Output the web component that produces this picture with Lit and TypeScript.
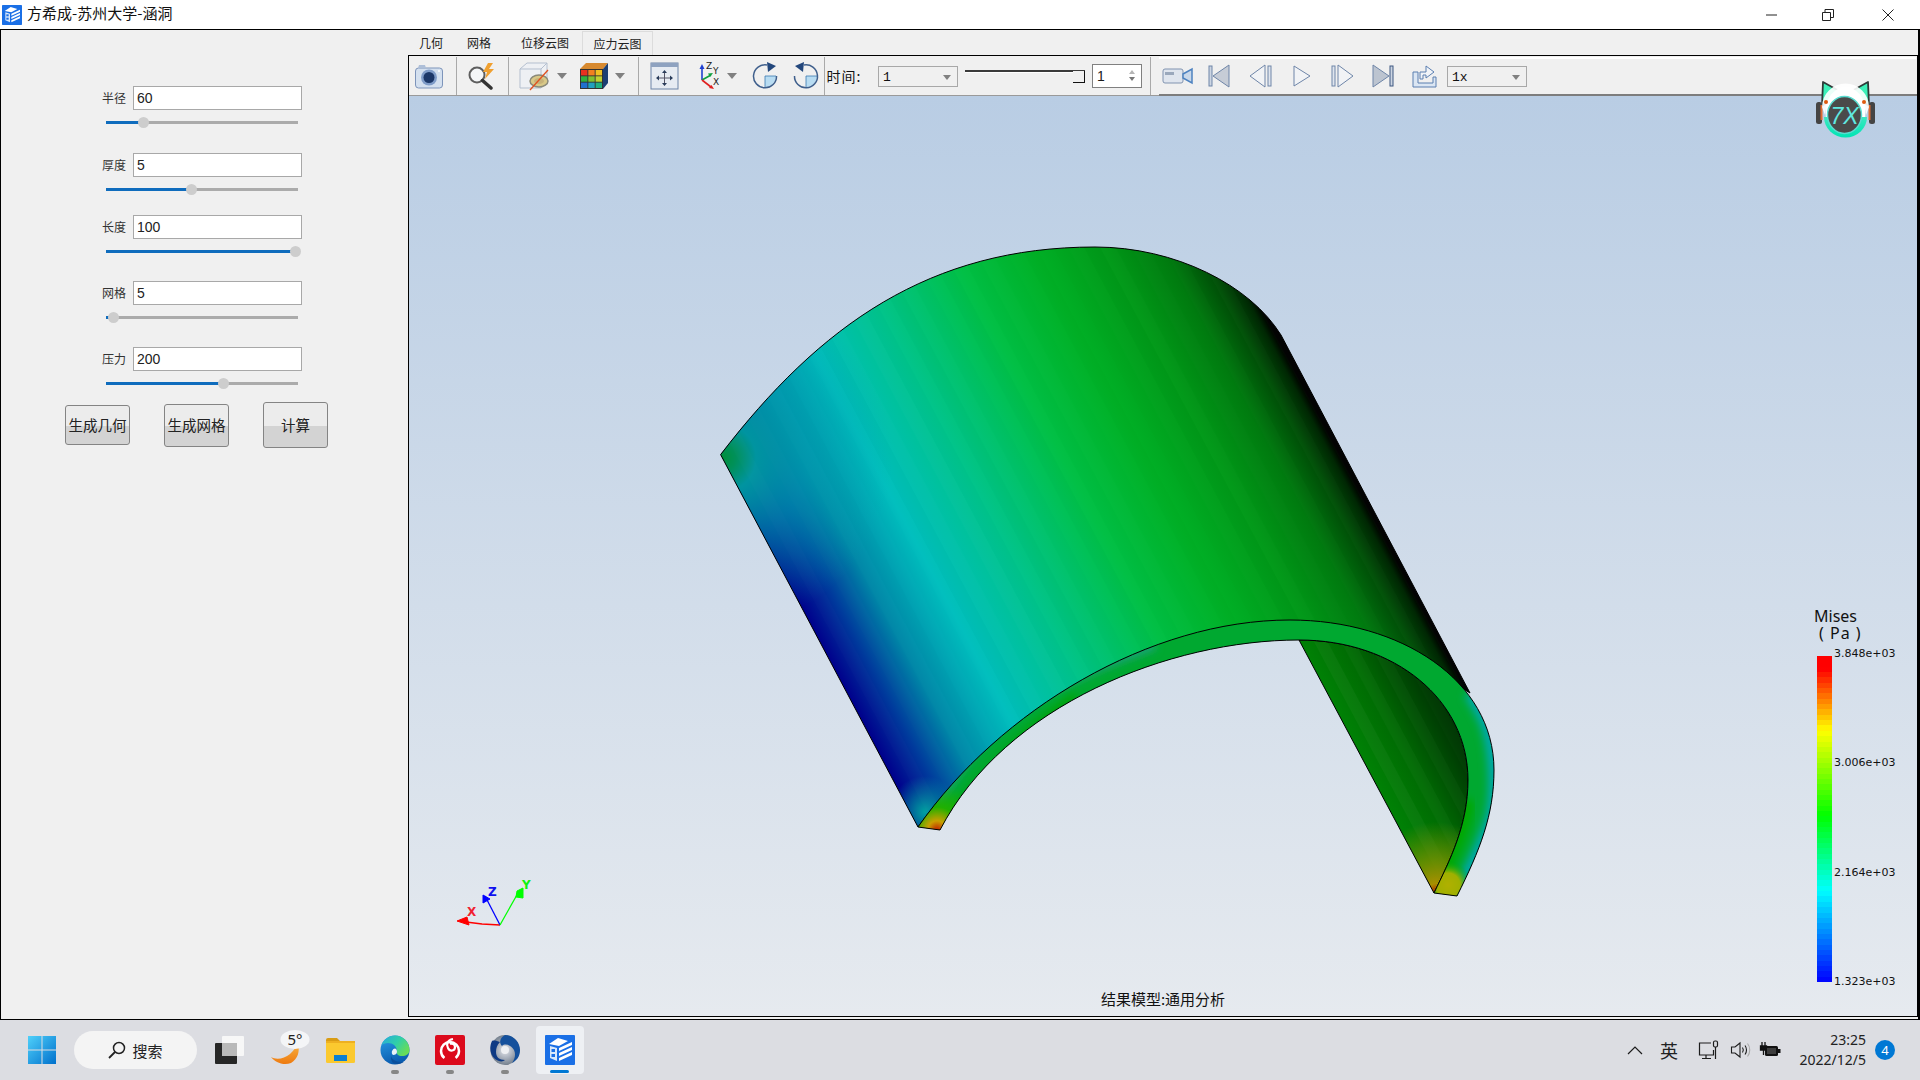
import { LitElement, html, css, svg, TemplateResult } from "lit";
import { customElement } from "lit/decorators.js";

type Pt = [number, number];
const smooth = (p: Pt[]): string => {
  let d = `M${p[0][0]} ${p[0][1]}`;
  for (let i = 0; i < p.length - 1; i++) {
    const a = p[Math.max(i - 1, 0)], b = p[i], c = p[i + 1], e = p[Math.min(i + 2, p.length - 1)];
    d += ` C${b[0] + (c[0] - a[0]) / 6} ${b[1] + (c[1] - a[1]) / 6} ${c[0] - (e[0] - b[0]) / 6} ${c[1] - (e[1] - b[1]) / 6} ${c[0]} ${c[1]}`;
  }
  return d;
};
const OUTER: Pt[] = [[918, 827], [977, 748], [1036, 700], [1095, 669], [1155, 645], [1214, 629], [1273, 621], [1300, 620], [1343, 624], [1383, 635], [1413, 647], [1440, 663], [1470, 693], [1487, 727], [1494, 770], [1492, 813], [1480, 847], [1457, 896]];
const INNER: Pt[] = [[940, 830], [1016, 745], [1076, 697], [1135, 669], [1194, 651], [1254, 642], [1299, 640], [1343, 646], [1383, 657], [1413, 673], [1437, 693], [1457, 723], [1468, 767], [1468, 800], [1460, 833], [1434, 893]];
const bodyPath = "M720.6 454.6 C820 325 930 247 1095 247 C1175 247 1250 285 1281 335 L1470 693 L1400 650 L1290 625 C1150 625 1000 712 918 827 Z";
const ringPath = "M918 827 C1000 710 1150 620 1290 620 C1400 620 1494 680 1494 770 C1494 815 1480 850 1457 896 L1434 893 C1450 860 1468 825 1468 780 C1468 700 1395 640 1299 640 C1170 640 1005 705 940 830 Z";
const cavPath = "M1299 640 C1395 640 1468 700 1468 780 C1468 825 1450 860 1434 893 Z";

const facets = (ox: number, oy: number, count: number, w: number, amp: number) => {
  const out: TemplateResult[] = [];
  for (let i = 0; i < count; i++) {
    const s = i * w;
    const bx = ox + 0.88 * s - 0.47 * 60, by = oy - 0.47 * s - 0.88 * 60;
    const L = 640;
    const p = [
      [bx, by],
      [bx + 0.88 * w, by - 0.47 * w],
      [bx + 0.88 * w + 0.47 * L, by - 0.47 * w + 0.88 * L],
      [bx + 0.47 * L, by + 0.88 * L],
    ].map((q) => q.join(",")).join(" ");
    const r = Math.sin(i * 12.9898) * 43758.5453;
    const f = r - Math.floor(r);
    out.push(svg`<polygon points=${p} fill=${i % 2 ? "#fff" : "#000"} opacity=${(f * amp).toFixed(3)}/>`);
  }
  return out;
};

const bandColor = (t: number) => {
  const k: Pt[] = [[0.04, 0], [0.23, 60], [0.49, 120], [0.72, 180], [1, 240]];
  if (t <= k[0][0]) return "hsl(0,100%,50%)";
  for (let i = 0; i < k.length - 1; i++) {
    if (t <= k[i + 1][0]) {
      const f = (t - k[i][0]) / (k[i + 1][0] - k[i][0]);
      return `hsl(${k[i][1] + f * (k[i + 1][1] - k[i][1])},100%,50%)`;
    }
  }
  return "hsl(240,100%,50%)";
};
const BANDS = 61;
const barGradient = "linear-gradient(to bottom," + Array.from({ length: BANDS }, (_, i) => {
  const c = bandColor((i + 0.5) / BANDS);
  return `${c} ${(i / BANDS) * 100}%,${c} ${((i + 1) / BANDS) * 100}%`;
}).join(",") + ")";

const place = (items: { cx: number; w: number; t: TemplateResult }[], origin: number) => {
  let cur = origin;
  return items.map((i) => {
    const m = i.cx - i.w / 2 - cur;
    cur = i.cx + i.w / 2;
    return html`<div class="slot" style="margin-left:${m}px;width:${i.w}px">${i.t}</div>`;
  });
};

const ic = (w: number, h: number, body: TemplateResult) =>
  html`<svg width=${w} height=${h} viewBox="0 0 ${w} ${h}">${body}</svg>`;

const I = {
  camera: ic(30, 26, svg`<rect x="1.5" y="5" width="27" height="20" rx="3" fill="#d4e0ef" stroke="#7d94ba"/><path d="M4 5l1-3h6l1 3z" fill="#aebfd8"/><circle cx="15" cy="14.5" r="8" fill="#7f9cc8"/><circle cx="15" cy="14.5" r="5.5" fill="#1b3768"/><circle cx="25" cy="8" r="1" fill="#fff"/>`),
  zoom: ic(32, 28, svg`<circle cx="11" cy="13" r="7.5" fill="#f4f6f8" stroke="#5e5e5e" stroke-width="2"/><path d="M16.5 18.5L25 26" stroke="#333" stroke-width="3.5" stroke-linecap="round"/><path d="M22 1l-5 9h4l-2 7 9-10h-5l4-6z" fill="#f0a030"/>`),
  clip: ic(32, 30, svg`<path d="M1 8l7-6h20v18l-6 7H1z" fill="#eef0f4" stroke="#b4bfcf"/><path d="M1 8h21v19M22 8l6-6" fill="none" stroke="#b4bfcf"/><ellipse cx="20" cy="20" rx="9" ry="6" fill="#d8c888" stroke="#8a8a7a" stroke-width="1.5"/><ellipse cx="20" cy="20" rx="5" ry="3" fill="#c7b27a"/><path d="M11 29L29 9" stroke="#e05020" stroke-width="1.3"/>`),
  grid: ic(30, 28, svg`<path d="M1 7l6-6h22l-5 6z" fill="#d88a30"/><path d="M24 7l5-6v20l-5 6z" fill="#1c3f74"/><rect x="1" y="7" width="23" height="20" fill="#333"/><rect x="2" y="8" width="6.4" height="5.4" fill="#e83020"/><rect x="9.3" y="8" width="6.4" height="5.4" fill="#f08020"/><rect x="16.6" y="8" width="6.4" height="5.4" fill="#f0c020"/><rect x="2" y="14.3" width="6.4" height="5.4" fill="#30b040"/><rect x="9.3" y="14.3" width="6.4" height="5.4" fill="#80c030"/><rect x="16.6" y="14.3" width="6.4" height="5.4" fill="#c0d030"/><rect x="2" y="20.6" width="6.4" height="5.4" fill="#2070d0"/><rect x="9.3" y="20.6" width="6.4" height="5.4" fill="#20a0c0"/><rect x="16.6" y="20.6" width="6.4" height="5.4" fill="#20b080"/>`),
  fit: ic(30, 28, svg`<rect x="1" y="1" width="27" height="26" fill="#e6ebf2" stroke="#6c84a8"/><rect x="1" y="1" width="27" height="4" fill="#8ea2c0"/><path d="M14.5 9v14M7.500 16h14" stroke="#556" stroke-width="1"/><path d="M14.5 8l-2.500 3h5zM14.500 24l-2.500-3h5zM6 16l3-2.500v5zM23 16l-3-2.500v5z" fill="#2a3c5a"/>`),
  axes: html`<svg width="28" height="30" viewBox="0 0 28 30"><path d="M9 19V6" stroke="#2040d0" stroke-width="1.6"/><path d="M9 3l-2.500 5h5z" fill="#2040d0"/><path d="M9 19l9-5" stroke="#10a040" stroke-width="1.6"/><path d="M20 12l-5 .5 2 3.500z" fill="#10a040"/><path d="M9 19l9 7" stroke="#e02020" stroke-width="1.6"/><path d="M21 28l-5-1 2.500-3z" fill="#e02020"/><text class="ax" x="13" y="8">Z</text><text class="ax" x="20" y="13">Y</text><text class="ax" x="20" y="24">X</text></svg>`,
  cw: ic(28, 28, svg`<path d="M14 14V25A11 11 0 0 0 25 14z" fill="#b8dcf2"/><path d="M14 14v11M14 14h11" stroke="#3a78b0" stroke-width=".8"/><path d="M16 3A11.500 11.500 0 1 0 25.500 14" fill="none" stroke="#3f5f8c" stroke-width="1.500"/><path d="M16 0l9 4-8 6z" fill="#23477c"/>`),
  ccw: ic(28, 28, svg`<path d="M14 14V25A11 11 0 0 0 25 14z" fill="#b8dcf2"/><path d="M14 14v11M14 14h11" stroke="#3a78b0" stroke-width=".8"/><path d="M12 3A11.500 11.500 0 1 1 2.500 14" fill="none" stroke="#3f5f8c" stroke-width="1.500"/><path d="M12 0L3 4l8 6z" fill="#23477c"/>`),
  video: ic(32, 18, svg`<rect x="1" y="2" width="20" height="14" rx="2" fill="#dfe5ee" stroke="#8093b0"/><rect x="3" y="5" width="9" height="3" fill="#9aa8bc"/><path d="M21 7l9-5v14l-9-5z" fill="#c9d8ea" stroke="#4d82c0" stroke-width="1.500"/>`),
  first: ic(24, 24, svg`<rect x="2" y="2" width="3" height="20" fill="#ccd5e2" stroke="#6e85a8"/><path d="M22 1v22L6 12z" fill="#c6ccd6" stroke="#6e85a8"/>`),
  prev: ic(24, 24, svg`<rect x="19" y="2" width="3" height="20" fill="#dfe5ee" stroke="#6e85a8"/><path d="M16 1v22L1 12z" fill="#f1f3f6" stroke="#6e85a8"/>`),
  play: ic(20, 24, svg`<path d="M2 2v20L18 12z" fill="#f1f3f6" stroke="#6e85a8"/>`),
  next: ic(24, 24, svg`<rect x="2" y="2" width="3" height="20" fill="#dfe5ee" stroke="#6e85a8"/><path d="M8 1v22L23 12z" fill="#f1f3f6" stroke="#6e85a8"/>`),
  last: ic(24, 24, svg`<rect x="19" y="2" width="3" height="20" fill="#ccd5e2" stroke="#3c5680"/><path d="M2 1v22L18 12z" fill="#bcc4d0" stroke="#6e85a8"/>`),
  exp: ic(26, 24, svg`<path d="M2 8h5v11h15v-6h3v10H2z" fill="#dbe6f3" stroke="#5a7eb0"/><path d="M9 15V8h6V2l8 6-8 6v-3h-3v4z" fill="#f1f4f8" stroke="#5a7eb0"/>`),
  drop: html`<span class="tri big"></span>`,
  win: ic(30, 30, svg`<defs><linearGradient id="w" x1="0" y1="0" x2="1" y2="1"><stop offset="0" stop-color="#4fd0fa"/><stop offset="1" stop-color="#0070cc"/></linearGradient></defs><path fill="url(#w)" d="M1 1h13.500v13.500H1zM15.500 1H29v13.500H15.500zM1 15.500h13.500V29H1zM15.500 15.500H29V29H15.500z"/>`),
  search: ic(18, 18, svg`<circle cx="11" cy="7" r="5.500" fill="none" stroke="#222" stroke-width="1.500"/><path d="M7 11l-6 6" stroke="#222" stroke-width="1.800"/>`),
  task: ic(32, 30, svg`<rect x="1" y="8" width="22" height="21" rx="1" fill="#262626"/><rect x="8" y="1" width="22" height="20" rx="1" fill="#fafafa" opacity=".9"/><rect x="8" y="8" width="15" height="13" fill="#b9b9b9"/>`),
  weather: html`<svg width="46" height="40" viewBox="0 0 46 40"><defs><linearGradient id="mo" x1="0" y1="0" x2="0" y2="1"><stop offset="0" stop-color="#f8b040"/><stop offset="1" stop-color="#ee7a10"/></linearGradient></defs><path d="M6 27c5 3 13 2 19-3 4-4 6-7 8-10 2 7 0 15-7 19-8 3-16-1-20-6z" fill="url(#mo)"/><ellipse cx="30" cy="9.500" rx="14.500" ry="9.500" fill="#f4f5f7"/><text class="wx" x="30" y="15" text-anchor="middle">5°</text></svg>`,
  folder: ic(30, 26, svg`<path d="M1 3a2 2 0 0 1 2-2h9l3 3h-14z" fill="#d99c14"/><rect x="1" y="4" width="29" height="22" rx="1.500" fill="#fbc92f"/><rect x="1" y="4" width="29" height="2" fill="#eeb020"/><rect x="9" y="18" width="13" height="6" fill="#0a7fd0"/>`),
  edge: html`<svg width="30" height="30" viewBox="0 0 30 30"><defs><linearGradient id="e1" x1="0" y1="0" x2="1" y2=".6"><stop offset="0" stop-color="#28a8e0"/><stop offset=".55" stop-color="#30cfa8"/><stop offset="1" stop-color="#68dc58"/></linearGradient><linearGradient id="e2" x1="0" y1="0" x2=".3" y2="1"><stop offset="0" stop-color="#2aa0e8"/><stop offset="1" stop-color="#0a5cb0"/></linearGradient></defs><circle cx="15" cy="15" r="14.500" fill="url(#e2)"/><path d="M15 .5C23 .5 29.500 7 29.500 15c0 4-3.500 6-7.500 6-4 0-5.500-2-5-4 0-6-4-9-9-9-3 0-5 1-6.500 2C3.500 4.500 9 .5 15 .5z" fill="url(#e1)"/><path d="M12 16c2-4 5-3 5 1 0 2-2 3-4 3-1-1-1.500-2-1-4z" fill="#e8f2f8"/><path d="M11 21c1 4 6 6 11 6 1 0 2 0 3-1-3 3-8 3.500-11 2.500-2-1-3.500-4-3-7.500z" fill="#0b4f9c"/></svg>`,
  cloud: ic(30, 30, svg`<rect x="0" y="0" width="30" height="30" rx="2" fill="#dc0a1c"/><circle cx="15" cy="16" r="9" fill="none" stroke="#fff" stroke-width="2.500" stroke-dasharray="46 12" stroke-dashoffset="-20"/><path d="M18 4c-6 1-7 6-5 9 2 4 7 3 7-1 0-3-3-4-5-3" fill="none" stroke="#fff" stroke-width="2.200"/>`),
  shield: html`<svg width="30" height="30" viewBox="0 0 30 30"><defs><radialGradient id="sh" cx=".5" cy=".5" r=".55"><stop offset="0" stop-color="#e6e8ec"/><stop offset=".5" stop-color="#a8b0bc"/><stop offset="1" stop-color="#6a7684"/></radialGradient></defs><ellipse cx="15" cy="15" rx="14.500" ry="15" fill="url(#sh)"/><path d="M15 0c8 0 15 7 15 15 0 7-4 11-8 13 3-4 4-9 2-13-3-5-9-7-12-4-4-4-1-9 3-11z" fill="#14509c"/><path d="M2 6c-3 6-2 14 3 18 4 3 8 3 10 1-6 0-9-3-9-8 0-4 1-7 4-10-3-1-6-2-8-1z" fill="#0e3a84"/><circle cx="15" cy="15" r="4" fill="#eef0f3"/></svg>`,
  appIcon: (s: number) => html`<svg width=${s} height=${s} viewBox="0 0 30 30"><rect width="30" height="30" rx="1" fill="#1a6fe6"/><path d="M4 9l9-6 10 3-9 5z" fill="#fff"/><path d="M5 11l7 2v13l-7-3z" fill="#d8e8fb"/><rect x="6.500" y="14" width="3.500" height="3" fill="#1a6fe6"/><rect x="6.500" y="19" width="3.500" height="3" fill="#1a6fe6"/><path d="M14 13l13-6v3l-13 6zM14 18l13-6v3l-13 6zM14 23l13-6v3l-13 6z" fill="#fff"/></svg>`,
  monitor: ic(24, 20, svg`<path d="M13 3H1.500v12h14V10" fill="none" stroke="#1c1c1c" stroke-width="1.200"/><path d="M8 15v3M4 18.500h9" stroke="#1c1c1c" stroke-width="1.200"/><rect x="15.500" y="1" width="4" height="6" rx="1.500" fill="none" stroke="#1c1c1c" stroke-width="1.200"/><path d="M17.500 7v12" stroke="#1c1c1c" stroke-width="1.200"/>`),
  speaker: ic(22, 18, svg`<path d="M1.500 6h3.500l5-4v14l-5-4H1.500z" fill="none" stroke="#1c1c1c" stroke-width="1.100"/><path d="M12.500 6.500c1 1.500 1 3.500 0 5M15 4.500c2 2.500 2 6.500 0 9" fill="none" stroke="#1c1c1c" stroke-width="1.100"/><path d="M17.500 2.500c3 3.500 3 9.500 0 13" fill="none" stroke="#aaa" stroke-width="1.100"/>`),
  battery: ic(22, 18, svg`<path d="M3 1v4M6 1v4M1.500 5h6v4h-6zM4.500 9v5" stroke="#111" fill="#111" stroke-width="1.300"/><rect x="6" y="5" width="13" height="10" rx="1.500" fill="#111"/><rect x="19" y="8" width="2.500" height="4" fill="#111"/><rect x="8" y="7" width="9" height="6" fill="#3d3d3d"/>`),
  cat: html`<svg width="60" height="57" viewBox="0 0 60 57"><defs><linearGradient id="mint" x1="0" y1="0" x2="0" y2="1"><stop offset="0" stop-color="#3ce8c0"/><stop offset="1" stop-color="#00e4b4"/></linearGradient></defs><path d="M7 1L6 25l19-14zM52 1l1 24-19-14z" fill="#3cf0b8" stroke="#2e3a38" stroke-width="1.800" stroke-linejoin="round"/><ellipse cx="29.500" cy="31" rx="20" ry="25" fill="#fff"/><path d="M8 36A21.500 20.500 0 0 0 29.500 56.500 21.500 20.500 0 0 0 51 36z" fill="url(#mint)"/><rect x="0" y="21" width="6" height="22" rx="2.500" fill="#444"/><rect x="53" y="21" width="6" height="22" rx="2.500" fill="#444"/><rect x="4.500" y="24" width="2" height="15" fill="#e06a30"/><rect x="52.500" y="24" width="2" height="15" fill="#e06a30"/><path d="M6 26a23.500 23.500 0 0 1 47 0l-3 8a20.500 20.500 0 0 0-41 0z" fill="#fff" opacity=".9"/><circle cx="10" cy="21" r="2" fill="#e05a10"/><circle cx="48" cy="21" r="2" fill="#e05a10"/><ellipse cx="28.500" cy="34" rx="17" ry="18.500" fill="#4a4a4a" stroke="#58dcd0" stroke-width="1.500"/><text class="catx" x="28.500" y="43" text-anchor="middle">7X</text></svg>`,
};

const FIELDS = [
  { label: "半径", value: "60", thumb: 143, gap: 0 },
  { label: "厚度", value: "5", thumb: 191, gap: 25 },
  { label: "长度", value: "100", thumb: 295, gap: 20 },
  { label: "网格", value: "5", thumb: 113, gap: 24 },
  { label: "压力", value: "200", thumb: 223, gap: 24 },
];
const TRACK_X = 106, TRACK_W = 192;

@customElement("app-root")
export class AppRoot extends LitElement {
  static styles = css`
    :host { display: block; width: 1920px; height: 1080px; overflow: hidden; font-family: "Noto Sans CJK SC", sans-serif; color: #1a1a1a; }
    .app { width: 1920px; height: 1080px; display: flex; flex-direction: column; background: #fff; }
    .slot { flex: none; display: flex; align-items: center; justify-content: center; }
    .title { height: 29px; flex: none; display: flex; align-items: center; background: #fff; }
    .title .logo { margin-left: 2px; width: 20px; height: 20px; display: flex; }
    .title .name { margin-left: 5px; font-size: 15px; line-height: 26px; height: 29px; white-space: nowrap; color: #111; }
    .wbtns { margin-left: auto; width: 180px; height: 29px; display: flex; align-items: center; }
    .window { height: 991px; flex: none; box-sizing: border-box; border: 1px solid #000; border-right-width: 2px; border-bottom-width: 1px; background: #f0f0f0; display: flex; }
    .panel { width: 407px; flex: none; padding-top: 56px; box-sizing: border-box; }
    .row { display: flex; align-items: center; height: 24px; padding-left: 101px; }
    .lab { width: 26px; font-size: 12px; line-height: 24px; height: 24px; color: #333; white-space: nowrap; }
    .inp { margin-left: 5px; width: 169px; height: 24px; box-sizing: border-box; border: 1px solid #a8a8a8; background: #fff; padding-left: 3px; font: 14px/23px "Liberation Sans", sans-serif; color: #222; }
    .slider { position: relative; margin: 7px 0 0 105px; width: 192px; height: 11px; }
    .track { position: absolute; left: 0; right: 0; top: 4px; height: 3px; background: #ababab; }
    .fill { position: absolute; left: 0; top: 4px; height: 3px; background: #0f6cbd; }
    .thumb { position: absolute; top: 0; width: 11px; height: 11px; margin-left: -5.5px; border-radius: 50%; background: #cdcdcd; }
    .btns { display: flex; align-items: center; margin-top: 13px; height: 46px; padding-left: 64px; gap: 34px; }
    .btn { width: 65px; box-sizing: border-box; border: 1px solid #848484; border-radius: 3px; padding-bottom: 2px; background: linear-gradient(#ececec 0 52%, #d3d3d3 52% 100%); display: flex; align-items: center; justify-content: center; font-size: 14.500px; color: #222; white-space: nowrap; }
    .right { width: 1510px; flex: none; display: flex; flex-direction: column; }
    .tabs { height: 25px; flex: none; position: relative; display: flex; align-items: stretch; font-size: 12px; }
    .tab { flex: none; display: flex; align-items: center; justify-content: center; color: #222; white-space: nowrap; }
    .tab.on { box-sizing: border-box; border: 1px solid #dcdcdc; border-bottom: none; margin-top: 1px; }
    .frame { height: 962px; flex: none; box-sizing: border-box; border: 1px solid #000; display: flex; flex-direction: column; }
    .toolbar { height: 40px; flex: none; box-sizing: border-box; position: relative; display: flex; align-items: center; background: #f0f0f0; border-bottom: 1px solid #9a9a9a; font-size: 14px; }
    .toolbar::after { content: ""; position: absolute; left: 750px; right: 1px; top: 1px; height: 2px; background: #fff; }
    .toolbar::before { content: ""; position: absolute; left: 750px; right: 0; bottom: -1px; height: 2px; background: #7d7d7d; }
    .sep { width: 1px; height: 38px; background: #a9a9a9; }
    .tri { display: block; width: 0; height: 0; border-left: 4.500px solid transparent; border-right: 4.500px solid transparent; border-top: 5px solid #808080; }
    .tri.big { border-left-width: 5.500px; border-right-width: 5.500px; border-top-width: 6px; }
    .combo { width: 100%; height: 21px; margin-top: 1px; box-sizing: border-box; border: 1px solid #a8a8a8; display: flex; align-items: center; justify-content: space-between; padding: 2px 6px 0 4px; font: 13px "Liberation Mono", monospace; color: #111; }
    .tslider { position: relative; width: 100%; height: 24px; }
    .tline { position: absolute; left: 0; right: 0; top: 6px; height: 2px; background: #3a3a3a; border-bottom: 1px solid #fff; }
    .thandle { position: absolute; right: 0; top: 7px; width: 12px; height: 12px; box-sizing: border-box; background: #f0f0f0; border-right: 1px solid #111; border-bottom: 1px solid #111; }
    .spin { width: 100%; height: 24px; box-sizing: border-box; border: 1px solid #808080; background: #fff; display: flex; align-items: center; justify-content: space-between; padding: 0 6px 0 4px; font: 14px "Liberation Sans", sans-serif; }
    .arrows { display: flex; flex-direction: column; gap: 3px; }
    .up { width: 0; height: 0; border-left: 3px solid transparent; border-right: 3px solid transparent; border-bottom: 4px solid #b5b5b5; }
    .dn { width: 0; height: 0; border-left: 3px solid transparent; border-right: 3px solid transparent; border-top: 4px solid #777; }
    .time { white-space: nowrap; font-size: 14px; letter-spacing: 1px; color: #111; }
    .ax { font: 9px "DejaVu Sans", sans-serif; fill: #222; }
    .view { flex: 1; position: relative; background: linear-gradient(#b9cde4, #e6eaef); }
    .scene { position: absolute; left: 0; top: 0; }
    .cat { position: absolute; left: 1407px; top: -15px; display: flex; }
    .catx { font: italic 400 23px "Liberation Sans", sans-serif; fill: #60e8e0; }
    .triadtxt { font: 700 12px "DejaVu Sans", sans-serif; }
    .legend { position: absolute; left: 1405px; top: 512px; color: #111; }
    .lt { font: 16px/17px "Noto Sans", sans-serif; white-space: nowrap; }
    .lt.b { padding-left: 5px; margin-bottom: 14px; letter-spacing: 1px; }
    .lrow { display: flex; padding-left: 3px; height: 326px; }
    .bar { width: 15px; height: 326px; flex: none; }
    .ticks { margin: -9px 0 0 2px; height: 342px; display: flex; flex-direction: column; justify-content: space-between; font: 11px/14px "DejaVu Sans", sans-serif; color: #111; }
    .cap { position: absolute; left: 0; right: 0; top: 893px; text-align: center; font-size: 15px; line-height: 20px; color: #111; }
    .task { height: 60px; flex: none; position: relative; display: flex; align-items: center; background: #dcdde2; }
    .pill { height: 38px; width: 100%; border-radius: 19px; background: #f4f4f4; display: flex; align-items: center; justify-content: center; gap: 6px; font-size: 15px; color: #222; }
    .active { width: 48px; height: 48px; position: relative; border-radius: 4px; background: #eef0f4; display: flex; align-items: center; justify-content: center; }
    .under { position: absolute; left: 14px; bottom: 1px; width: 19px; height: 3px; border-radius: 2px; background: #0078d4; }
    .dot { position: absolute; top: 50px; width: 8px; height: 4px; border-radius: 2px; background: #868686; }
    .wx { font: 15px "Noto Sans", sans-serif; fill: #222; }
    .ime { font-size: 18px; color: #222; }
    .clock { text-align: right; font: 14px/20px "Noto Sans", sans-serif; color: #222; white-space: nowrap; width: 100%; }
    .badge { width: 20px; height: 20px; border-radius: 50%; background: #0078d4; color: #fff; font: 13px/20px "Noto Sans", sans-serif; text-align: center; }
  `;

  private scene() {
    return svg`
      <defs>
        <linearGradient id="bodyG" gradientUnits="userSpaceOnUse" x1="720" y1="455" x2="1202" y2="197">
          <stop offset="0" stop-color="#00008c"/><stop offset=".06" stop-color="#003a9c"/><stop offset=".13" stop-color="#0088a8"/>
          <stop offset=".24" stop-color="#00bfbe"/><stop offset=".38" stop-color="#00c48c"/><stop offset=".55" stop-color="#00c045"/>
          <stop offset=".68" stop-color="#00b026"/><stop offset=".8" stop-color="#009818"/><stop offset=".89" stop-color="#007c10"/>
          <stop offset=".95" stop-color="#005008"/><stop offset=".985" stop-color="#002804"/><stop offset="1" stop-color="#000"/>
        </linearGradient>
        <linearGradient id="cavG" gradientUnits="userSpaceOnUse" x1="1345" y1="770" x2="1465" y2="705">
          <stop offset="0" stop-color="#008c06"/><stop offset=".45" stop-color="#006c04"/><stop offset=".8" stop-color="#003c04"/><stop offset="1" stop-color="#002a04"/>
        </linearGradient>
        <radialGradient id="hotA" gradientUnits="userSpaceOnUse" cx="937" cy="830" r="46">
          <stop offset="0" stop-color="#c02000"/><stop offset=".2" stop-color="#c8a000"/><stop offset=".5" stop-color="#20b000"/><stop offset="1" stop-color="#20b000" stop-opacity="0"/>
        </radialGradient>
        <radialGradient id="hotB" gradientUnits="userSpaceOnUse" cx="1436" cy="892" r="70">
          <stop offset="0" stop-color="#b02000"/><stop offset=".12" stop-color="#a89000"/><stop offset=".45" stop-color="#7a9000" stop-opacity=".8"/><stop offset="1" stop-color="#7a9000" stop-opacity="0"/>
        </radialGradient>
        <radialGradient id="hotC" gradientUnits="userSpaceOnUse" cx="1448" cy="885" r="24">
          <stop offset="0" stop-color="#b0b000"/><stop offset=".5" stop-color="#a0b000"/><stop offset="1" stop-color="#00a800" stop-opacity="0"/>
        </radialGradient>
        <radialGradient id="tealC" gradientUnits="userSpaceOnUse" cx="925" cy="812" r="36">
          <stop offset="0" stop-color="#00a0a0"/><stop offset="1" stop-color="#00a0a0" stop-opacity="0"/>
        </radialGradient>
        <radialGradient id="tealT" gradientUnits="userSpaceOnUse" cx="722" cy="458" r="170">
          <stop offset="0" stop-color="#00903a"/><stop offset=".08" stop-color="#00905a"/><stop offset=".2" stop-color="#0094a0"/><stop offset=".5" stop-color="#00a0b0" stop-opacity=".6"/><stop offset="1" stop-color="#00a8b0" stop-opacity="0"/>
        </radialGradient>
        <filter id="bl" x="-20%" y="-20%" width="140%" height="140%"><feGaussianBlur stdDeviation="4"/></filter>
        <clipPath id="ringClip"><path d=${ringPath}/></clipPath>
        <clipPath id="bodyClip"><path d=${bodyPath}/></clipPath>
        <clipPath id="cavClip"><path d=${cavPath}/></clipPath>
      </defs>
      <path d=${bodyPath} fill="url(#bodyG)"/>
      <path d=${bodyPath} fill="url(#tealT)"/>
      <path d=${bodyPath} fill="url(#tealC)"/>
      <g clip-path="url(#bodyClip)">${facets(720, 455, 40, 14, 0.014)}</g>
      <path d=${bodyPath} fill="none" stroke="#000" stroke-width="1"/>
      <path d=${cavPath} fill="url(#cavG)"/>
      <g clip-path="url(#cavClip)">${facets(1300, 641, 14, 12, 0.04)}</g>
      <path d=${cavPath} fill="url(#hotB)"/>
      <path d=${cavPath} fill="none" stroke="#000" stroke-width="1"/>
      <path d=${ringPath} fill="#00a830"/>
      <g clip-path="url(#ringClip)">
        <path d=${smooth(OUTER.slice(0, 5))} fill="none" stroke="#20a090" stroke-width="7" filter="url(#bl)"/>
        <path d=${smooth(INNER.slice(0, 3))} fill="none" stroke="#00a000" stroke-width="8" filter="url(#bl)"/>
        <path d=${smooth(OUTER.slice(12, 18))} fill="none" stroke="#00a8b0" stroke-width="12" filter="url(#bl)"/>
        <path d=${smooth(INNER.slice(13, 16))} fill="none" stroke="#00a800" stroke-width="14" filter="url(#bl)"/>
        <rect x="880" y="780" width="110" height="60" fill="url(#hotA)"/>
        <rect x="1420" y="850" width="60" height="60" fill="url(#hotC)"/>
      </g>
      <path d=${ringPath} fill="none" stroke="#000" stroke-width="1"/>
      <g transform="translate(430 860)" fill="none">
        <path d="M70 65L52 64 36 62" stroke="#f00" stroke-width="1.300"/>
        <path d="M27 61L37 57 39 65z" fill="#f00" stroke="#f00"/>
        <path d="M70 65L55 36" stroke="#00f" stroke-width="1.300"/>
        <path d="M53 35l7 4-7 4z" fill="#00f" stroke="#00f"/>
        <path d="M70 65L88 33" stroke="#0f0" stroke-width="1.300"/>
        <path d="M93 28l-6 3-1 6 7 1z" fill="#0f0" stroke="#0f0"/>
      </g>
      <text class="triadtxt" x="467" y="916" fill="#f02030">X</text>
      <text class="triadtxt" x="488" y="896" fill="#1010f0">Z</text>
      <text class="triadtxt" x="522" y="889" fill="#10f010">Y</text>
    `;
  }

  render() {
    const tools = place(
      [
        { cx: 429, w: 30, t: I.camera },
        { cx: 456, w: 1, t: html`<div class="sep"></div>` },
        { cx: 482, w: 32, t: I.zoom },
        { cx: 508, w: 1, t: html`<div class="sep"></div>` },
        { cx: 535, w: 32, t: I.clip },
        { cx: 562, w: 11, t: I.drop },
        { cx: 594, w: 30, t: I.grid },
        { cx: 620, w: 11, t: I.drop },
        { cx: 638, w: 1, t: html`<div class="sep"></div>` },
        { cx: 665, w: 30, t: I.fit },
        { cx: 707, w: 28, t: I.axes },
        { cx: 732, w: 11, t: I.drop },
        { cx: 765, w: 28, t: I.cw },
        { cx: 806, w: 28, t: I.ccw },
        { cx: 824, w: 1, t: html`<div class="sep"></div>` },
        { cx: 844, w: 36, t: html`<span class="time">时间:</span>` },
        { cx: 918, w: 80, t: html`<div class="combo"><span>1</span><span class="tri"></span></div>` },
        { cx: 1025, w: 120, t: html`<div class="tslider"><div class="tline"></div><div class="thandle"></div></div>` },
        { cx: 1117, w: 50, t: html`<div class="spin"><span>1</span><span class="arrows"><span class="up"></span><span class="dn"></span></span></div>` },
        { cx: 1150, w: 1, t: html`<div class="sep"></div>` },
        { cx: 1178, w: 32, t: I.video },
        { cx: 1219, w: 24, t: I.first },
        { cx: 1261, w: 24, t: I.prev },
        { cx: 1302, w: 20, t: I.play },
        { cx: 1342, w: 24, t: I.next },
        { cx: 1383, w: 24, t: I.last },
        { cx: 1424, w: 26, t: I.exp },
        { cx: 1487, w: 80, t: html`<div class="combo"><span>1x</span><span class="tri"></span></div>` },
      ],
      409
    );
    const tabs = place(
      [
        { cx: 431, w: 40, t: html`<div class="tab">几何</div>` },
        { cx: 479, w: 40, t: html`<div class="tab">网格</div>` },
        { cx: 545, w: 60, t: html`<div class="tab">位移云图</div>` },
      ],
      408
    );
    const taskItems = place(
      [
        { cx: 41.5, w: 30, t: I.win },
        { cx: 135.5, w: 123, t: html`<div class="pill">${I.search}<span>搜索</span></div>` },
        { cx: 230, w: 32, t: I.task },
        { cx: 288, w: 46, t: I.weather },
        { cx: 340, w: 30, t: I.folder },
        { cx: 395, w: 30, t: I.edge },
        { cx: 450, w: 30, t: I.cloud },
        { cx: 505, w: 30, t: I.shield },
        { cx: 560, w: 48, t: html`<div class="active">${I.appIcon(30)}<div class="under"></div></div>` },
        { cx: 1635, w: 16, t: html`<svg width="16" height="9" viewBox="0 0 16 9"><path d="M1 8l7-7 7 7" fill="none" stroke="#1c1c1c" stroke-width="1.200"/></svg>` },
        { cx: 1669, w: 20, t: html`<span class="ime">英</span>` },
        { cx: 1710, w: 24, t: I.monitor },
        { cx: 1741, w: 22, t: I.speaker },
        { cx: 1770, w: 22, t: I.battery },
        { cx: 1831, w: 70, t: html`<div class="clock">23:25<br />2022/12/5</div>` },
        { cx: 1885, w: 20, t: html`<div class="badge">4</div>` },
      ],
      0
    );
    return html`<div class="app">
      <div class="title">
        <div class="logo">${I.appIcon(20)}</div>
        <div class="name">方希成-苏州大学-涵洞</div>
        <div class="wbtns">
          ${place(
            [
              { cx: 1771, w: 11, t: html`<svg width="11" height="2" viewBox="0 0 11 2"><path d="M0 1h11" stroke="#222"/></svg>` },
              { cx: 1828, w: 12, t: html`<svg width="12" height="12" viewBox="0 0 12 12"><path d="M.5 3.500h8v8h-8zM3 3.500V.5h8.500v8H8.500" fill="none" stroke="#222"/></svg>` },
              { cx: 1888, w: 12, t: html`<svg width="12" height="12" viewBox="0 0 12 12"><path d="M.5.5l11 11M11.500.5l-11 11" stroke="#222"/></svg>` },
            ],
            1740
          )}
        </div>
      </div>
      <div class="window">
        <div class="panel">
          ${FIELDS.map(
            (f) => html`<div style="margin-top:${f.gap}px">
              <div class="row"><span class="lab">${f.label}</span><div class="inp">${f.value}</div></div>
              <div class="slider">
                <div class="track"></div>
                <div class="fill" style="width:${f.thumb - TRACK_X}px"></div>
                <div class="thumb" style="left:${((f.thumb - TRACK_X) / TRACK_W) * 100}%"></div>
              </div>
            </div>`
          )}
          <div class="btns">
            <div class="btn" style="height:40px">生成几何</div>
            <div class="btn" style="height:43px">生成网格</div>
            <div class="btn" style="height:46px">计算</div>
          </div>
        </div>
        <div class="right">
          <div class="tabs">
            ${tabs}
            <div class="tab on" style="margin-left:7px;width:71px">应力云图</div>
          </div>
          <div class="frame">
            <div class="toolbar">${tools}</div>
            <div class="view">
              <svg class="scene" width="1508" height="920" viewBox="409 96 1508 920">${this.scene()}</svg>
              <div class="legend">
                <div class="lt">Mises</div>
                <div class="lt b">( Pa )</div>
                <div class="lrow">
                  <div class="bar" style="background:${barGradient}"></div>
                  <div class="ticks"><span>3.848e+03</span><span>3.006e+03</span><span>2.164e+03</span><span>1.323e+03</span></div>
                </div>
              </div>
              <div class="cat">${I.cat}</div>
              <div class="cap">结果模型:通用分析</div>
            </div>
          </div>
        </div>
      </div>
      <div class="task">
        ${taskItems}
        <div class="dot" style="left:391px"></div>
        <div class="dot" style="left:446px"></div>
        <div class="dot" style="left:501px"></div>
      </div>
    </div>`;
  }
}
